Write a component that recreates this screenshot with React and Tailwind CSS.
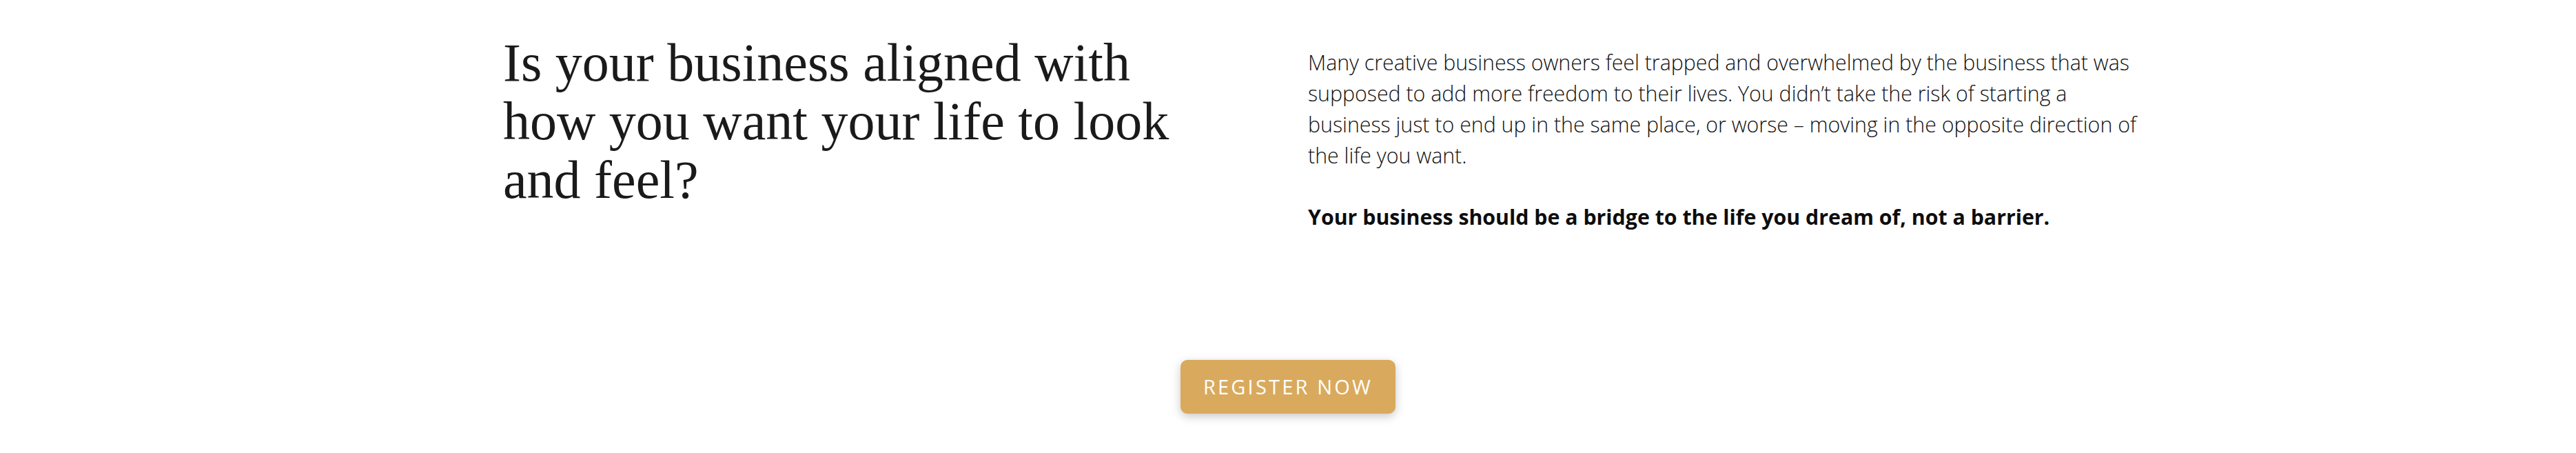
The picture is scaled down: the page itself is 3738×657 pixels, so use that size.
const App = () => {
  return (
    <div className="min-h-screen bg-white">
      <main className="pt-[48px]">
        <section className="flex items-start pl-[730px] pr-[625px]">
          <h2 className="w-[985px] flex-none font-['Liberation_Serif',serif] text-[78px] leading-[85px] font-normal text-[#1a1a1a]">
            Is your business aligned with how you want your life to look and feel?
          </h2>
          <div className="ml-auto w-[1215px] pt-[20px] font-['Open_Sans',sans-serif] text-[30.3px] leading-[45px] text-[#111]">
            <p className="font-light">
              Many creative business owners feel trapped and overwhelmed by the business that was
              supposed to add more freedom to their lives. You didn’t take the risk of starting a
              business just to end up in the same place, or worse – moving in the opposite direction
              of the life you want.
            </p>
            <p className="mt-[44px] font-bold text-[#0d0d0d]">
              Your business should be a bridge to the life you dream of, not a barrier.
            </p>
          </div>
        </section>

        <div className="mt-[185px] flex justify-center">
          <button
            type="button"
            className="h-[78px] w-[312px] rounded-[10px] bg-[#d9aa5d] font-['Open_Sans',sans-serif] text-[29px] font-normal tracking-[3.2px] text-white shadow-[0_4px_14px_rgba(0,0,0,0.22)]"
          >
            REGISTER NOW
          </button>
        </div>
      </main>
    </div>
  );
};

export default App;
